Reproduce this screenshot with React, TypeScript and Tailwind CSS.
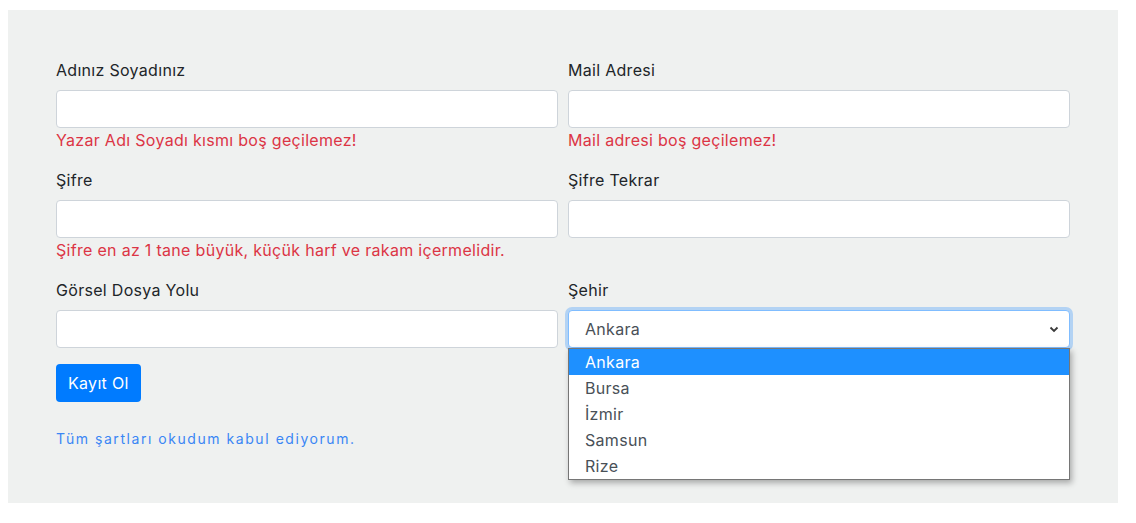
import React from "react";

const font = { fontFamily: "Inter, 'Noto Sans', sans-serif" };

function Field({ label, error, children }: { label: string; error?: string; children?: React.ReactNode }) {
  return (
    <div className="mb-4 flex flex-col">
      <label className="mb-2 text-[16px] leading-6 tracking-[0.3px] text-[#212529]">{label}</label>
      {children ?? (
        <input className="h-[38px] w-full rounded-[4px] border border-[#ced4da] bg-white px-3 outline-none" />
      )}
      {error && <div className="text-[16px] leading-6 tracking-[0.3px] text-[#dc3545]">{error}</div>}
    </div>
  );
}

export default function App() {
  const options = ["Ankara", "Bursa", "İzmir", "Samsun", "Rize"];
  return (
    <div className="min-h-[523px] bg-white pt-[10px]" style={font}>
      <div className="ml-2 w-[1110px] bg-[#eff1f0] px-12 pt-12 pb-[54px]">
        <div className="grid grid-cols-[502px_502px] gap-x-[10px]">
          <Field label="Adınız Soyadınız" error="Yazar Adı Soyadı kısmı boş geçilemez!" />
          <Field label="Mail Adresi" error="Mail adresi boş geçilemez!" />
          <Field label="Şifre" error="Şifre en az 1 tane büyük, küçük harf ve rakam içermelidir." />
          <Field label="Şifre Tekrar" />
          <Field label="Görsel Dosya Yolu" />
          <Field label="Şehir">
            <div className="relative">
              <div className="flex h-[38px] w-full items-center justify-between rounded-[4px] border border-[#80bdff] bg-white pl-4 pr-[10px] text-[16px] tracking-[0.3px] text-[#495057] shadow-[0_0_0_3px_rgba(0,123,255,0.25)]">
                <span>Ankara</span>
                <svg width="10" height="7" viewBox="0 0 10 7">
                  <path d="M1.5 1.5 L5 5 L8.5 1.5" fill="none" stroke="#3a3a3a" strokeWidth="1.8" />
                </svg>
              </div>
              <div className="absolute left-0 top-[38px] z-10 w-[502px] border border-[#767676] bg-white shadow-[2px_3px_6px_rgba(0,0,0,0.3)]">
                {options.map((o, i) => (
                  <div
                    key={o}
                    className={
                      "h-[26px] pl-4 text-[16px] leading-[26px] tracking-[0.3px] " +
                      (i === 0 ? "bg-[#1e90ff] text-white" : "text-[#495057]")
                    }
                  >
                    {o}
                  </div>
                ))}
              </div>
            </div>
          </Field>
        </div>
        <button className="h-[38px] rounded-[4px] bg-[#007bff] px-3 text-[16px] tracking-[0.3px] text-white">Kayıt Ol</button>
        <div className="mt-[26px] text-[14px] leading-[21px] tracking-[1.55px] text-[#3a86f5]">
          Tüm şartları okudum kabul ediyorum.
        </div>
      </div>
    </div>
  );
}
